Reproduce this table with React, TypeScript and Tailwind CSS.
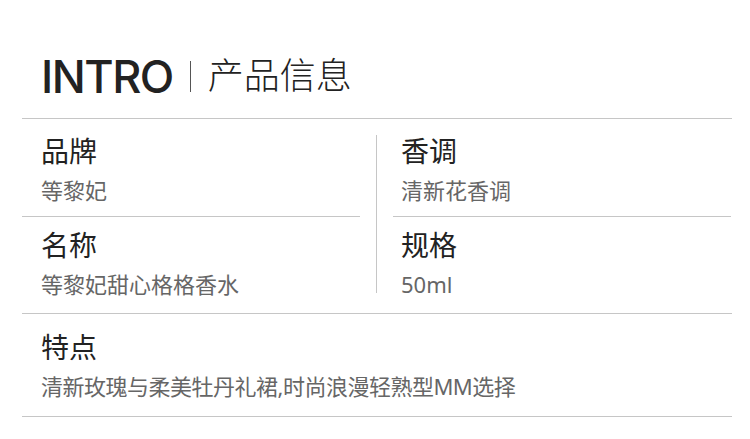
const cjk = "font-['Noto_Sans','Noto_Sans_CJK_SC',sans-serif]";

function Cell({ label, value, className = "" }: { label: string; value: string; className?: string }) {
  return (
    <div className={className}>
      <div className="text-[28px] leading-[35px] text-[#222]">{label}</div>
      <div className="mt-[7px] text-[22px] leading-[28px] text-[#666]">{value}</div>
    </div>
  );
}

export default function App() {
  return (
    <div className={`w-[750px] h-[439px] bg-white ${cjk}`}>
      {/* header */}
      <div className="flex items-center h-[118px] pt-[34px] pl-[41px]">
        <span className="font-['Inter',sans-serif] text-[45px] font-medium leading-none tracking-[-1.5px] text-[#222]">
          INTRO
        </span>
        <span className="ml-[17px] mr-[17px] h-[31px] w-px bg-[#555]" />
        <span className="text-[36px] font-light leading-none text-[#222]">产品信息</span>
      </div>

      <div className="ml-[22px] mr-[18px] border-t border-[#c6c6c6]">
        <div className="flex h-[195px] border-b border-[#c6c6c6]">
          <div className="flex w-[338px] flex-col">
            <Cell label="品牌" value="等黎妃" className="h-[98px] border-b border-[#c6c6c6] pl-[19px] pt-[15px]" />
            <Cell label="名称" value="等黎妃甜心格格香水" className="flex-1 pl-[19px] pt-[11px]" />
          </div>
          <div className="w-[33px] pl-[16px] pt-[16px] pb-[20px]">
            <div className="h-full w-px bg-[#c6c6c6]" />
          </div>
          <div className="flex w-[338px] flex-col">
            <Cell label="香调" value="清新花香调" className="h-[98px] border-b border-[#c6c6c6] pl-[8px] pt-[15px]" />
            <Cell label="规格" value="50ml" className="flex-1 pl-[8px] pt-[11px]" />
          </div>
        </div>
        <div className="h-[103px] border-b border-[#c6c6c6] pl-[19px] pt-[16px]">
          <div className="text-[28px] leading-[35px] text-[#222]">特点</div>
          <div className="mt-[7px] text-[22px] leading-[28px] tracking-[-0.5px] text-[#666]">
            清新玫瑰与柔美牡丹礼裙,时尚浪漫轻熟型MM选择
          </div>
        </div>
      </div>
    </div>
  );
}
